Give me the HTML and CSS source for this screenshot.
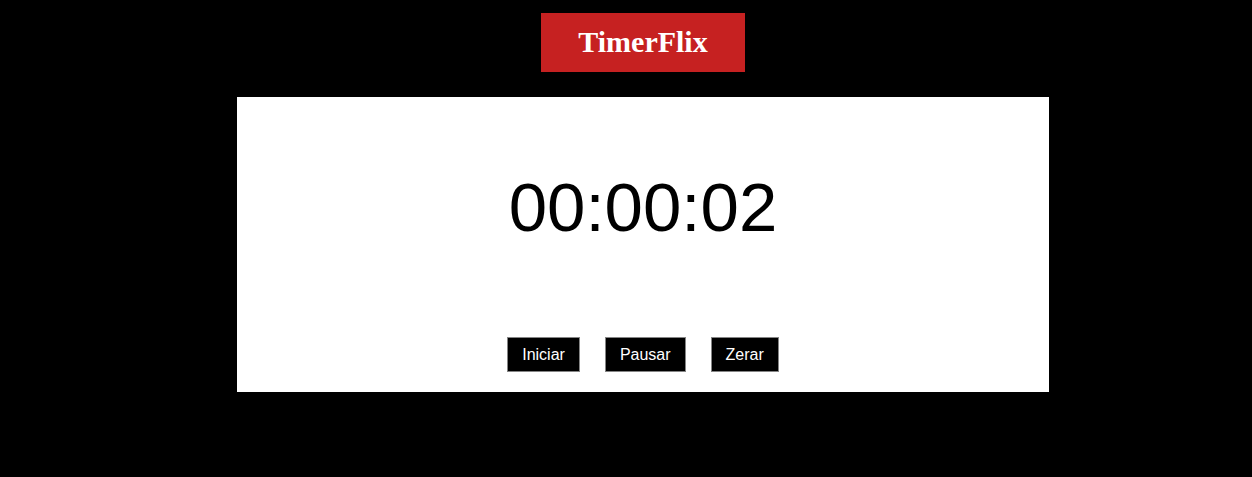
FILE: index.html
```html
<!DOCTYPE html>
<html lang="pt">
<head>
<meta charset="utf-8">
<title>TimerFlix</title>
<link rel="stylesheet" href="styles.css">
</head>
<body>
<div class="page">
  <header class="brand">TimerFlix</header>
  <main class="card">
    <div class="timer">00:00:02</div>
    <div class="controls">
      <button class="btn">Iniciar</button>
      <button class="btn">Pausar</button>
      <button class="btn">Zerar</button>
    </div>
  </main>
</div>
</body>
</html>
```
FILE: styles.css
```css
html, body {
  margin: 0;
  padding: 0;
  background: #000;
}
.page {
  display: flex;
  flex-direction: column;
  align-items: center;
  padding: 13px 0 0 34px;
  gap: 25px;
}
.brand {
  background: #c62121;
  color: #fff;
  font-family: "Liberation Serif", "Times New Roman", serif;
  font-weight: bold;
  font-size: 30px;
  line-height: 35px;
  padding: 11px 37px 13px;
}
.card {
  background: #fff;
  width: 812px;
  box-sizing: border-box;
  padding: 71px 0 20px;
  display: flex;
  flex-direction: column;
  align-items: center;
}
.timer {
  font-family: "Liberation Sans", Arial, sans-serif;
  font-size: 69px;
  line-height: 80px;
  color: #000;
  margin-bottom: 89px;
}
.controls {
  display: flex;
  gap: 25px;
}
.btn {
  font-family: "Liberation Sans", Arial, sans-serif;
  font-size: 16px;
  line-height: 17px;
  color: #fff;
  background: #000;
  border: 1px solid #858585;
  padding: 8px 14px;
  margin: 0;
  border-radius: 0;
}
```
